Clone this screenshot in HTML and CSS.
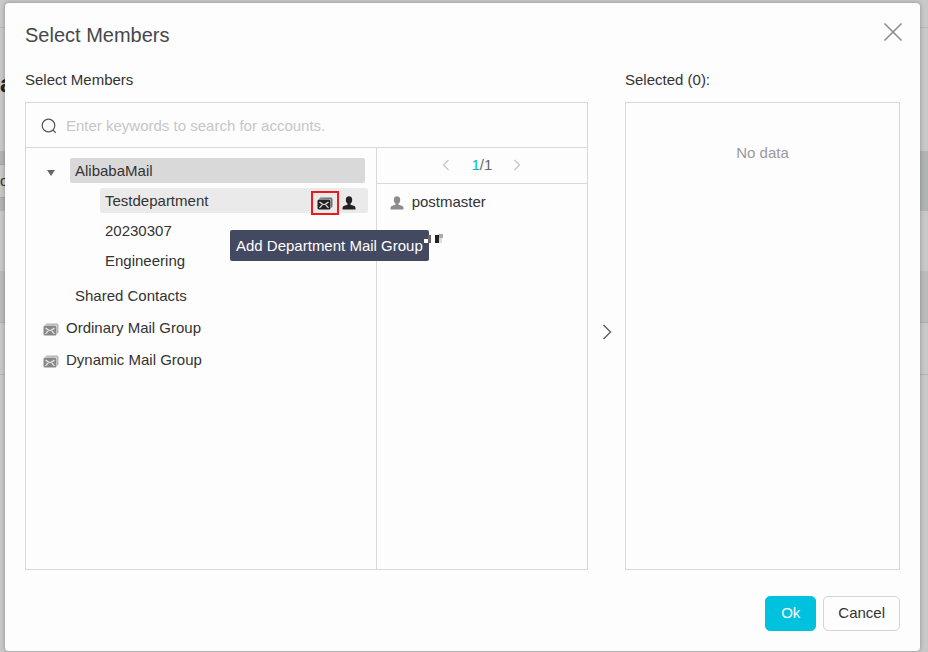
FILE: index.html
```html
<!DOCTYPE html>
<html lang="en">
<head>
<meta charset="utf-8">
<title>Select Members</title>
<link rel="stylesheet" href="styles.css">
</head>
<body>
<svg class="sprite" aria-hidden="true">
  <symbol id="mail" viewBox="0 0 16 13">
    <path d="M2 1.800 3.500.5H14q1.500 0 1.500 1.500v7.500L14 11V3.500Q14 2 12.500 2z" fill="currentColor" opacity=".6"/>
    <rect x=".5" y="2.500" width="13" height="10" rx="1.500" fill="currentColor"/>
    <path d="m2.500 5 2.500 1.800q2 1.400 4 0L11.500 5M2.500 10.800l2.800-3M11.500 10.800l-2.800-3" fill="none" stroke="#eee" stroke-width="1.100"/>
  </symbol>
  <symbol id="person" viewBox="0 0 14 14">
    <ellipse cx="7" cy="4" rx="3.200" ry="3.700" fill="currentColor"/>
    <path d="M.5 13.500v-1.700Q.7 10 3 9.500l2.500-.8V7h3v1.700l2.500.8q2.300.5 2.500 2.300v1.700z" fill="currentColor"/>
  </symbol>
</svg>
<div class="page" aria-hidden="true">
  <div class="page-bar"></div>
  <div class="page-title">a</div>
  <div class="page-tools"><span class="page-field">o</span></div>
  <div class="page-row"></div>
  <div class="page-row page-row-dark"></div>
  <div class="page-row page-row-line"></div>
</div>
<section class="dialog" role="dialog" aria-labelledby="title">
  <header class="head">
    <h1 id="title">Select Members</h1>
    <button class="close" aria-label="Close"><svg width="20" height="20" viewBox="0 0 20 20"><path d="m1.500 1.500 17 17m0-17-17 17"/></svg></button>
  </header>
  <div class="columns">
    <h2><label for="search">Select Members</label></h2>
    <h2 class="selected-title">Selected (0):</h2>
    <div class="picker">
      <div class="search">
        <svg width="16" height="16" viewBox="0 0 16 16"><circle cx="7.500" cy="7.500" r="6.300"/><path d="m12 12 2.800 2.800"/></svg>
        <input id="search" type="text" placeholder="Enter keywords to search for accounts.">
      </div>
      <div class="panes">
        <div class="tree">
          <div class="root-row">
            <button class="toggle" aria-label="Collapse"><svg width="8" height="6" viewBox="0 0 8 6"><path d="M0 0h8L4 6z"/></svg></button>
            <button class="node node-root">AlibabaMail</button>
          </div>
          <div class="children">
            <div class="hovered">
              <button class="node">Testdepartment</button>
              <button class="action marked" aria-label="Add Department Mail Group"><svg width="16" height="13"><use href="#mail"/></svg></button>
              <button class="action" aria-label="Add Members"><svg width="14" height="14"><use href="#person"/></svg></button>
              <div class="tooltip" role="tooltip">Add Department Mail Group<span class="pixels"><svg width="20" height="12" viewBox="0 0 20 12"><path fill="#fff" d="M0 5h4v4H0z"/><path fill="#666" d="M4 1h3v8H4z"/><path fill="#222" d="M11 1h4v8h-4z"/><path fill="#aaa" d="M15 0h4v4h-4z"/><path fill="#ddd" d="M15 4h3v5h-3z"/></svg></span></div>
            </div>
            <button class="node">20230307</button>
            <button class="node">Engineering</button>
          </div>
          <button class="node shared">Shared Contacts</button>
          <button class="group"><svg width="16" height="13"><use href="#mail"/></svg>Ordinary Mail Group</button>
          <button class="group"><svg width="16" height="13"><use href="#mail"/></svg>Dynamic Mail Group</button>
        </div>
        <div class="accounts">
          <nav class="pager">
            <button aria-label="Previous page"><svg width="8" height="12" viewBox="0 0 8 12"><path d="M6.500 1 1.500 6l5 5"/></svg></button>
            <span><b>1</b>/1</span>
            <button aria-label="Next page"><svg width="8" height="12" viewBox="0 0 8 12"><path d="m1.500 1 5 5-5 5"/></svg></button>
          </nav>
          <button class="account"><svg width="14" height="14"><use href="#person"/></svg>postmaster</button>
        </div>
      </div>
    </div>
    <button class="move" aria-label="Add to selected"><svg width="10" height="16" viewBox="0 0 10 16"><path d="m1.500 1 7 7-7 7"/></svg></button>
    <div class="selected">No data</div>
  </div>
  <footer class="foot">
    <button class="btn primary">Ok</button>
    <button class="btn">Cancel</button>
  </footer>
</section>
</body>
</html>
```
FILE: styles.css
```css
* { box-sizing: border-box; }
html, body { height: 100%; }
body {
  margin: 0;
  overflow: hidden;
  background: #c8c8c8;
  color: #333;
  font: 15px/20px "Liberation Sans", Arial, sans-serif;
}
h1, h2 { margin: 0; font-weight: 400; }
button {
  padding: 0;
  border: 0;
  background: none;
  color: inherit;
  font: inherit;
  text-align: left;
  cursor: pointer;
}
svg { display: block; flex: none; }
.sprite { position: absolute; width: 0; height: 0; }

.page-bar { height: 28px; border-bottom: 1px solid #b8b8b8; }
.page-title {
  height: 123px;
  padding-top: 40px;
  color: #222;
  font-size: 24px;
  line-height: 32px;
  font-weight: 700;
}
.page-tools { height: 60px; padding: 13px 0; background: #b1b4b3; }
.page-field {
  display: block;
  width: 40px;
  height: 34px;
  border: solid #a5a5a5;
  border-width: 1px 0;
  background: #c8c8c8;
  line-height: 32px;
}
.page-row { height: 60px; }
.page-row-dark { height: 52px; background: #bbb; border-bottom: 1px solid #afafaf; }
.page-row-line { height: 52px; border-bottom: 1px solid #b4b4b4; }

.dialog {
  position: absolute;
  inset: 3px 8px 1px 5px;
  display: flex;
  flex-direction: column;
  padding: 20px;
  border-radius: 4px;
  background: #fdfdfd;
  box-shadow: 0 0 4px rgba(0, 0, 0, .3);
}
.head { display: flex; justify-content: space-between; height: 44px; }
h1 { color: #44484c; font-size: 20px; line-height: 24px; }
.close { align-self: flex-start; width: 24px; height: 20px; margin-right: -5px; }
.close svg { margin: -3px auto 0; }
.close path { stroke: #888; stroke-width: 1.500; }

.columns {
  flex: 1;
  display: grid;
  grid-template: 35px 1fr / 563fr 37px 275fr;
  min-height: 0;
}
h2 { padding-top: 3px; font-size: 15px; line-height: 20px; }
.selected-title { grid-column: 3; }
.picker, .selected { border: 1px solid #d8d8d8; }
.picker { display: flex; flex-direction: column; min-width: 0; }
.search {
  display: flex;
  align-items: center;
  gap: 9px;
  height: 45px;
  padding: 2px 15px 0;
  border-bottom: 1px solid #d8d8d8;
}
.search svg { fill: none; stroke: #555; stroke-width: 1.200; }
.search input {
  flex: 1;
  padding: 0;
  border: 0;
  outline: 0;
  background: none;
  color: inherit;
  font: inherit;
}
.search input::placeholder { color: #c6c6c6; }

.panes { flex: 1; display: grid; grid-template-columns: 5fr 3fr; }
.tree {
  display: flex;
  flex-direction: column;
  padding: 10px 8px 10px 16px;
  border-right: 1px solid #d8d8d8;
}
.root-row { display: flex; margin-right: 3px; }
.toggle { width: 28px; padding: 4px 5px 0; }
.toggle path { fill: #666; }
.node { height: 25px; padding: 0 5px; line-height: 25px; }
.node-root { flex: 1; border-radius: 2px; background: #d9d9d9; }
.children { display: grid; gap: 5px; margin: 5px 0 10px 58px; }
.hovered {
  position: relative;
  display: flex;
  height: 25px;
  border-radius: 2px;
  background: #eaeaea;
}
.hovered .node { flex: 1; }
.action { display: grid; place-items: center; width: 20px; height: 24px; margin: 3px 9px 0 0; color: #222; }
.marked { width: 28px; margin-right: 0; border: 2px solid #f01818; }
.tooltip {
  position: absolute;
  top: 42px;
  left: 130px;
  z-index: 1;
  padding: 6px 6px 5px;
  border-radius: 2px;
  background: #434960;
  color: #fff;
  white-space: nowrap;
}
.pixels { position: absolute; top: 4px; right: -15px; }
.shared { margin: 0 0 4px 28px; }
.group { display: flex; align-items: center; gap: 7px; height: 32px; padding-left: 1px; }
.group svg { margin-top: 2px; color: #888; }

.pager {
  display: flex;
  align-items: center;
  justify-content: center;
  gap: 21px;
  height: 36px;
  padding-bottom: 1px;
  border-bottom: 1px solid #d8d8d8;
  color: #666;
}
.pager b { color: #00b8d8; font-weight: 400; }
.pager path { fill: none; stroke: #c4c4c4; stroke-width: 1.200; }
.account { display: flex; align-items: center; gap: 8px; height: 36px; padding-left: 13px; }
.account svg { margin-top: 2px; color: #8c8c8c; }

.move { display: grid; place-items: center; padding: 0 0 8px 1px; }
.move path { fill: none; stroke: #666; stroke-width: 1.500; }
.selected { padding-top: 40px; color: #999; text-align: center; }

.foot { display: flex; justify-content: flex-end; gap: 7px; padding-top: 26px; }
.btn {
  height: 35px;
  padding: 0 14px 2px;
  border: 1px solid #d4d4d4;
  border-radius: 5px;
}
.primary { padding: 0 15px 2px; border-color: #00c1de; background: #00c1de; color: #fff; }
```
